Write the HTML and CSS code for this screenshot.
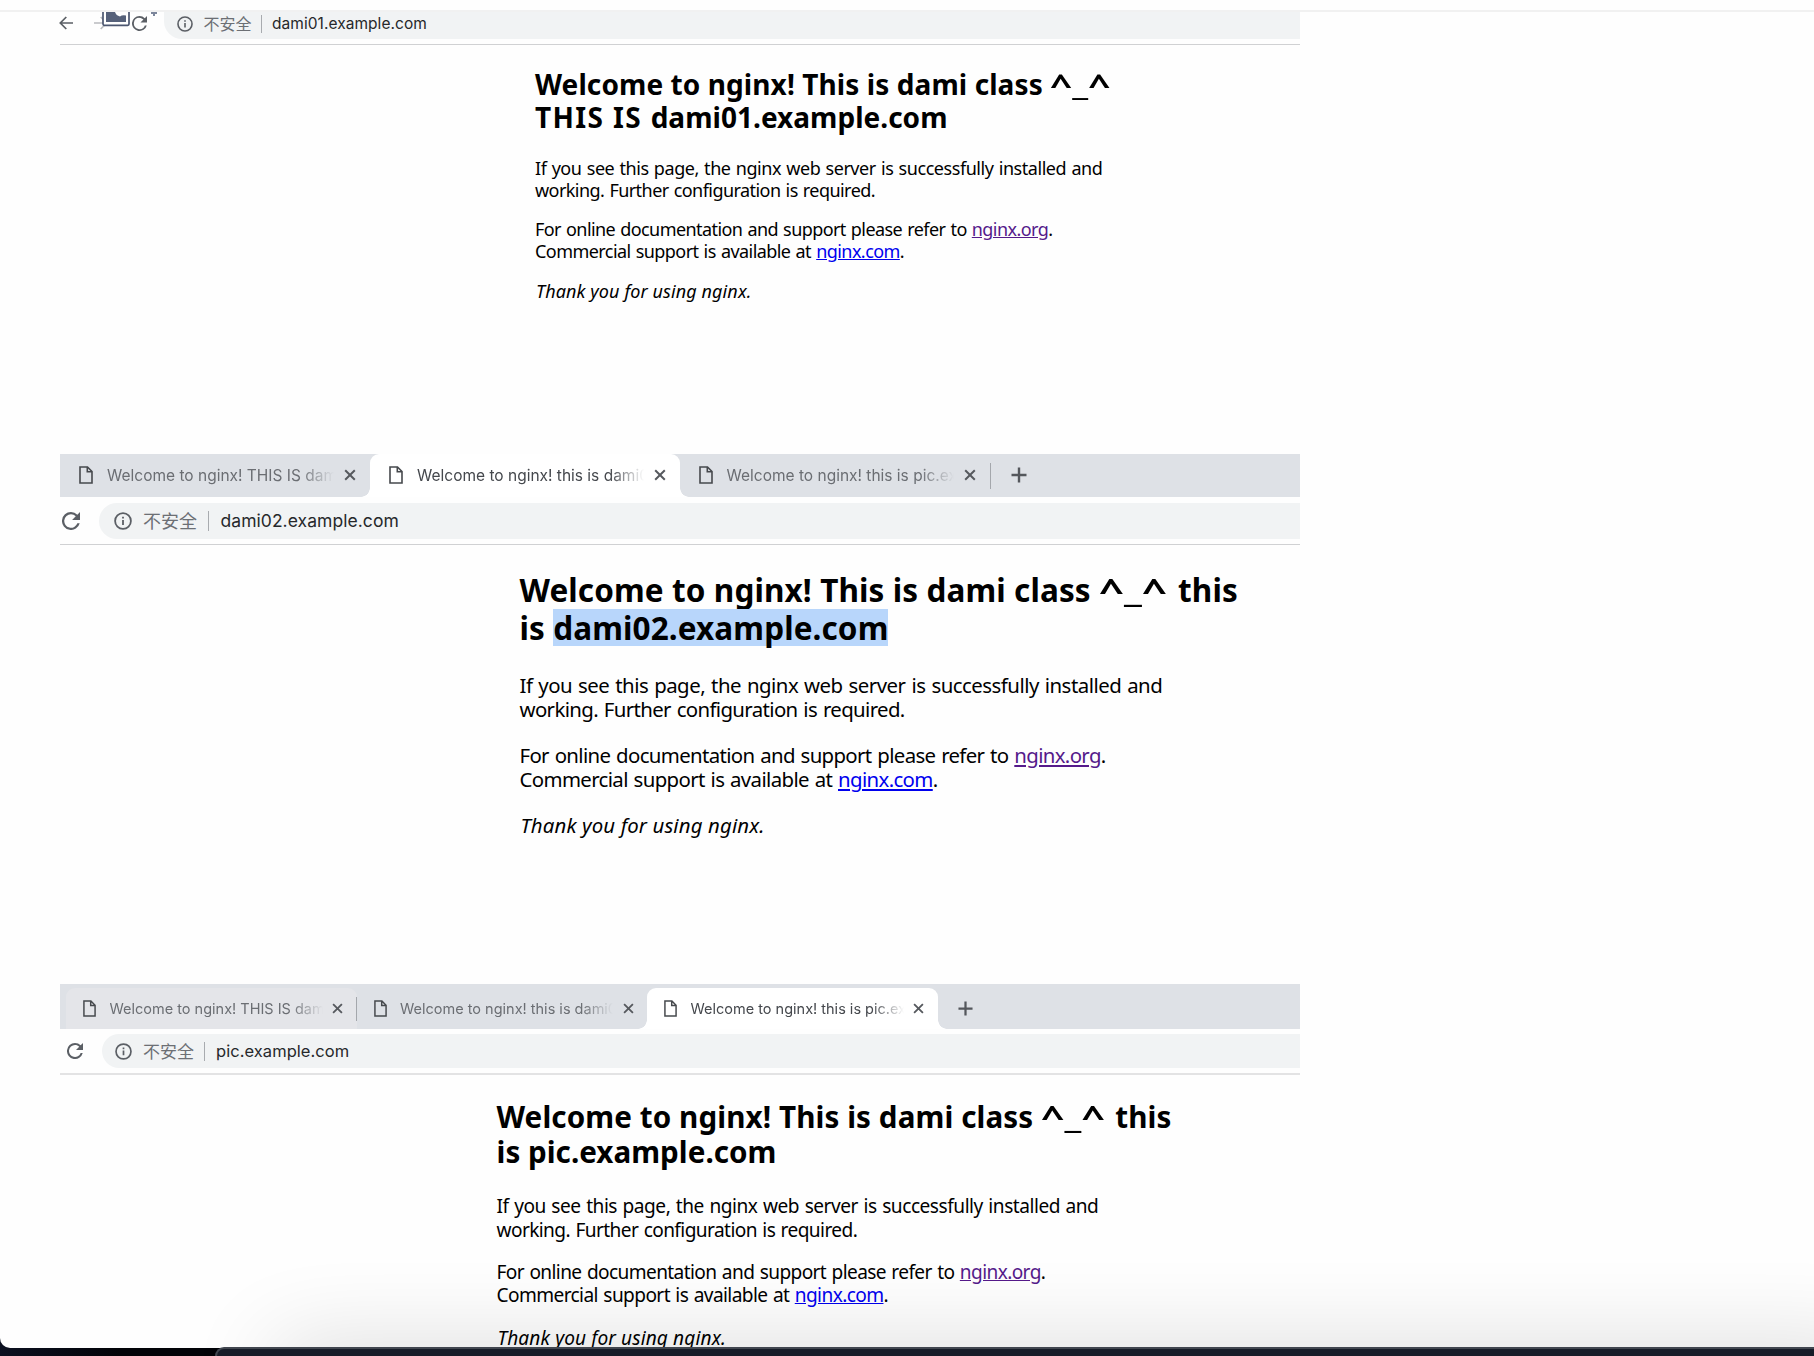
FILE: index.html
```html
<!DOCTYPE html>
<html lang="zh">
<head>
<meta charset="utf-8">
<title>nginx virtual hosts</title>
<link rel="stylesheet" href="styles.css">
</head>
<body>
<svg class="defs" width="0" height="0">
  <symbol id="file" viewBox="0 0 14 18"><path d="M1 1h7.5L13 5.5V17H1zM8.3 1v4.7H13" fill="none" stroke="#46494d" stroke-width="1.6"/></symbol>
  <symbol id="close" viewBox="0 0 12 12"><path d="M1.2 1.2l9.6 9.6M10.8 1.2l-9.6 9.6" fill="none" stroke="#56595e" stroke-width="2"/></symbol>
  <symbol id="plus" viewBox="0 0 16 16"><path d="M8 .5v15M.5 8h15" fill="none" stroke="#54575c" stroke-width="2.4"/></symbol>
  <symbol id="reload" viewBox="0 0 16 16"><path d="M13.65 2.35A7.96 7.96 0 0 0 8 0a8 8 0 1 0 7.73 10h-2.08A6 6 0 1 1 8 2c1.66 0 3.14.69 4.22 1.78L9 7h7V0z" fill="#5b5f65"/></symbol>
  <symbol id="info" viewBox="0 0 18 18"><circle cx="9" cy="9" r="7.9" fill="none" stroke="#5b5f65" stroke-width="1.8"/><path d="M8.1 8h1.8v5H8.1zM8.1 4.8h1.8v1.8H8.1z" fill="#5b5f65"/></symbol>
</svg>
<div class="page">
  <div class="topline"></div>

  <section class="shot one">
    <div class="address">
      <svg class="back" viewBox="0 0 14 14"><path d="M14 7H1.5M7.3 1L1.3 7l6 6" fill="none" stroke="#5b5f65" stroke-width="1.7"/></svg>
      <svg class="forward" viewBox="0 0 14 14"><path d="M0 7h12.5M6.7 1l6 6-6 6" fill="none" stroke="#b9bbbe" stroke-width="1.7"/></svg>
      <svg class="reload"><use href="#reload"/></svg>
      <div class="pill"><svg class="info"><use href="#info"/></svg><span class="unsafe">不安全</span><i class="bar"></i><span class="url">dami01.example.com</span></div>
      <svg class="overlay" viewBox="0 0 56 16"><path d="M1 0v12q0 1.300 1.300 1.300h23.400q1.300 0 1.300-1.300V0" fill="#fff" stroke="#4b5670" stroke-width="1.7"/><path d="M4 0h9q1 3.500 5 4.500q2-1.800 6-1v6.500H4z" fill="#56617a"/><path d="M49 0h6v2h-2v2h-2v-2h-2z" fill="#7c869b"/></svg>
    </div>
    <article class="welcome">
      <h1><span>Welcome to nginx! This is dami class <span class="face">^_^</span></span><br><span class="wide">THIS IS </span><span class="host">dami01.example.com</span></h1>
      <p><span class="l1">If you see this page, the nginx web server is successfully installed and</span><br><span class="l2">working. Further configuration is required.</span></p>
      <p><span class="l3">For online documentation and support please refer to <a class="visited">nginx.org</a>.</span><br><span class="l2">Commercial support is available at <a>nginx.com</a>.</span></p>
      <p><em>Thank you for using nginx.</em></p>
    </article>
  </section>

  <section class="shot two">
    <div class="tabs">
      <div class="tab"><svg class="file"><use href="#file"/></svg><span class="title">Welcome to nginx! THIS IS dami01</span><svg class="close"><use href="#close"/></svg></div>
      <div class="tab active"><svg class="file"><use href="#file"/></svg><span class="title">Welcome to nginx! this is dami02</span><svg class="close"><use href="#close"/></svg></div>
      <div class="tab"><svg class="file"><use href="#file"/></svg><span class="title">Welcome to nginx! this is pic.example</span><svg class="close"><use href="#close"/></svg><i class="split"></i></div>
      <svg class="plus"><use href="#plus"/></svg>
    </div>
    <div class="address">
      <svg class="reload"><use href="#reload"/></svg>
      <div class="pill"><svg class="info"><use href="#info"/></svg><span class="unsafe">不安全</span><i class="bar"></i><span class="url">dami02.example.com</span></div>
    </div>
    <article class="welcome">
      <h1><span>Welcome to nginx! This is dami class <span class="face">^_^</span> this</span><br>is <span class="selected">dami02.example.com</span></h1>
      <p><span class="l1">If you see this page, the nginx web server is successfully installed and</span><br><span class="l2">working. Further configuration is required.</span></p>
      <p><span class="l3">For online documentation and support please refer to <a class="visited">nginx.org</a>.</span><br><span class="l2">Commercial support is available at <a>nginx.com</a>.</span></p>
      <p><em>Thank you for using nginx.</em></p>
    </article>
  </section>

  <section class="shot three">
    <div class="tabs">
      <div class="tab hover"><svg class="file"><use href="#file"/></svg><span class="title">Welcome to nginx! THIS IS dami01</span><svg class="close"><use href="#close"/></svg><i class="split"></i></div>
      <div class="tab"><svg class="file"><use href="#file"/></svg><span class="title">Welcome to nginx! this is dami02</span><svg class="close"><use href="#close"/></svg></div>
      <div class="tab active"><svg class="file"><use href="#file"/></svg><span class="title">Welcome to nginx! this is pic.example</span><svg class="close"><use href="#close"/></svg></div>
      <svg class="plus"><use href="#plus"/></svg>
    </div>
    <div class="address">
      <svg class="reload"><use href="#reload"/></svg>
      <div class="pill"><svg class="info"><use href="#info"/></svg><span class="unsafe">不安全</span><i class="bar"></i><span class="url">pic.example.com</span></div>
    </div>
    <article class="welcome">
      <h1><span>Welcome to nginx! This is dami class <span class="face">^_^</span> this</span><br><span class="host">is pic.example.com</span></h1>
      <p><span class="l1">If you see this page, the nginx web server is successfully installed and</span><br><span class="l2">working. Further configuration is required.</span></p>
      <p><span class="l3">For online documentation and support please refer to <a class="visited">nginx.org</a>.</span><br><span class="l2">Commercial support is available at <a>nginx.com</a>.</span></p>
      <p><em>Thank you for using nginx.</em></p>
    </article>
  </section>
</div>
<div class="dock"></div>
</body>
</html>
```
FILE: styles.css
```css
* { box-sizing: border-box; }
html { background: #05070d; }
body {
  margin: 0;
  width: 1814px;
  height: 1356px;
  overflow: hidden;
  position: relative;
  background: linear-gradient(90deg, #0b1020 0, #020308 120px);
}
.defs { position: absolute; }
.page {
  height: 1348px;
  overflow: hidden;
  background: #fefefe;
  border-bottom-left-radius: 10px;
  padding-top: 10px;
}
.topline { height: 2px; background: #f1f1f1; }
.shot { width: 1240px; margin-left: 60px; position: relative; }
.one { height: 442px; }
.two { height: 530px; }
.three { height: 364px; }

/* tab strip */
.tabs {
  display: flex;
  align-items: flex-end;
  background: #dee1e6;
}
.tab {
  position: relative;
  display: flex;
  align-items: center;
  flex: none;
  height: 100%;
  color: #6b6e73;
  font-family: Inter, sans-serif;
}
.tab svg { flex: none; }
.title {
  flex: none;
  overflow: hidden;
  white-space: nowrap;
  -webkit-mask-image: linear-gradient(90deg, #000 85%, transparent 100%);
  mask-image: linear-gradient(90deg, #000 85%, transparent 100%);
}
.active { background: #fff; color: #45484d; border-radius: 9px 9px 0 0; }
.active::before, .active::after {
  content: "";
  position: absolute;
  bottom: 0;
  width: 9px;
  height: 9px;
}
.active::before { left: -9px; background: radial-gradient(circle at 0 0, transparent 8.5px, #fff 9px); }
.active::after { right: -9px; background: radial-gradient(circle at 100% 0, transparent 8.5px, #fff 9px); }
.hover { background: #e4e5e9; border-radius: 9px 9px 0 0; }
.split { position: absolute; right: 0; width: 1px; background: #a4a7ac; }

.two .tabs { height: 43px; }
.two .tab { width: 309.5px; padding: 0 0 1px 19px; font-size: 15.5px; }
.two .tab:first-child { width: 310px; }
.two .tab:nth-child(3) { width: 311px; }
.two .file { width: 14px; height: 18px; margin-right: 14px; }
.two .title { width: 227px; margin-right: 10px; }
.two .close { width: 12px; height: 12px; }
.two .split { top: 9px; height: 26px; }
.two .plus { width: 16px; height: 16px; margin: 0 0 14px 20.5px; }

.three .tabs { height: 45px; padding: 4px 0 0 6px; }
.three .tab { width: 290.5px; padding-left: 17px; font-size: 14.5px; }
.three .file { width: 13px; height: 17px; margin-right: 13.5px; }
.three .title { width: 213px; margin-right: 9.5px; }
.three .close { width: 11px; height: 11px; }
.three .split { top: 9px; height: 24px; }
.three .plus { width: 15px; height: 15px; margin: 0 0 13px 20px; }

/* address bar */
.address {
  position: relative;
  display: flex;
  align-items: center;
  border-bottom: 1px solid #d0d1d3;
}
.address svg { flex: none; }
.pill {
  display: flex;
  align-items: center;
  flex: 1;
  background: #f1f3f4;
  border-radius: 18px 0 0 18px;
  white-space: nowrap;
}
.unsafe { color: #6c6f74; font-family: "Noto Sans CJK SC", sans-serif; padding-bottom: 2px; }
.url { color: #26282b; font-family: Inter, sans-serif; letter-spacing: .05px; }
.bar { width: 1px; background: #a8abaf; }

.one .address { height: 33px; align-items: flex-start; }
.one .back { width: 14px; height: 14px; margin: 4px 0 0 -1px; }
.one .forward { width: 14px; height: 14px; margin: 4px 0 0 21px; }
.one .reload { width: 15px; height: 15px; margin: 4px 0 0 24px; }
.one .pill { height: 27px; margin-left: 17px; padding: 0 0 4px 13px; border-radius: 0 0 0 18px; }
.one .info { width: 16px; height: 16px; margin-right: 10.5px; }
.one .unsafe { width: 48px; font-size: 16px; line-height: 20px; }
.one .bar { height: 18px; margin: 0 10.5px 0 9px; }
.one .url { font-size: 15.5px; line-height: 20px; }
.overlay { position: absolute; left: 42px; top: 0; width: 56px; height: 16px; }

.two .address { height: 48px; padding-left: 2px; }
.two .reload { width: 18px; height: 18px; }
.two .pill { height: 36px; margin-left: 19px; padding-left: 14.5px; }
.two .info { width: 18px; height: 18px; margin-right: 11.5px; }
.two .unsafe { width: 54.5px; font-size: 18px; }
.two .bar { height: 20px; margin: 0 12px 0 10px; }
.two .url { font-size: 17.5px; }

.three .address { height: 46px; padding-left: 7px; border-bottom: 2px solid #e3e3e4; }
.three .reload { width: 16px; height: 16px; }
.three .pill { height: 34px; margin-left: 18.5px; padding-left: 13.5px; }
.three .info { width: 17px; height: 17px; margin-right: 11px; }
.three .unsafe { width: 51px; font-size: 17px; }
.three .bar { height: 19px; margin: 0 11px 0 10px; }
.three .url { font-size: 16.5px; }

/* nginx welcome page */
.welcome { color: #000; font-family: "Noto Sans", sans-serif; white-space: nowrap; }
h1, p { margin: 0; }
h1 { font-weight: 700; letter-spacing: .0033em; }
.wide { letter-spacing: .0485em; }
.host { letter-spacing: .001em; }
.face {
  display: inline-block;
  transform: scaleX(1.38);
  transform-origin: 0 0;
  margin: 0 .68em 0 0;
}
.l1, .l2, .l3 { word-spacing: .055em; }
.l1 { letter-spacing: -.0247em; }
.l2 { letter-spacing: -.031em; }
.l3 { letter-spacing: -.032em; }
em { letter-spacing: .006em; padding-left: 1px; }
a { color: #0000ee; text-decoration: underline; }
a.visited { color: #551a8b; }
.selected { display: inline-block; background: #b8d6fb; }

.one .welcome { padding: 23.3px 0 0 475px; font-size: 18px; line-height: 21.6px; }
.one h1 { font-size: 28px; line-height: 33px; margin-bottom: 23.8px; }
.one p { margin-bottom: 18.2px; }

.two .welcome { padding: 26px 0 0 459.5px; font-size: 20.4px; line-height: 24.7px; }
.two h1 { font-size: 31.5px; line-height: 37.5px; margin-bottom: 26.6px; }
.two p { margin-bottom: 20.7px; }

.three .welcome { padding: 24px 0 0 436.5px; font-size: 19.1px; line-height: 23.3px; }
.three h1 { font-size: 29.6px; line-height: 35.4px; margin-bottom: 25.4px; }
.three p { margin-bottom: 19.4px; }

/* panel rising over the bottom edge */
.dock {
  position: absolute;
  left: 215px;
  top: 1347px;
  width: 1599px;
  height: 60px;
  background: #171c28;
  border: 2px solid #41464f;
  border-right: 0;
  border-top-left-radius: 9px;
  box-shadow: 60px 0 90px rgba(0, 0, 0, .16);
}
```
